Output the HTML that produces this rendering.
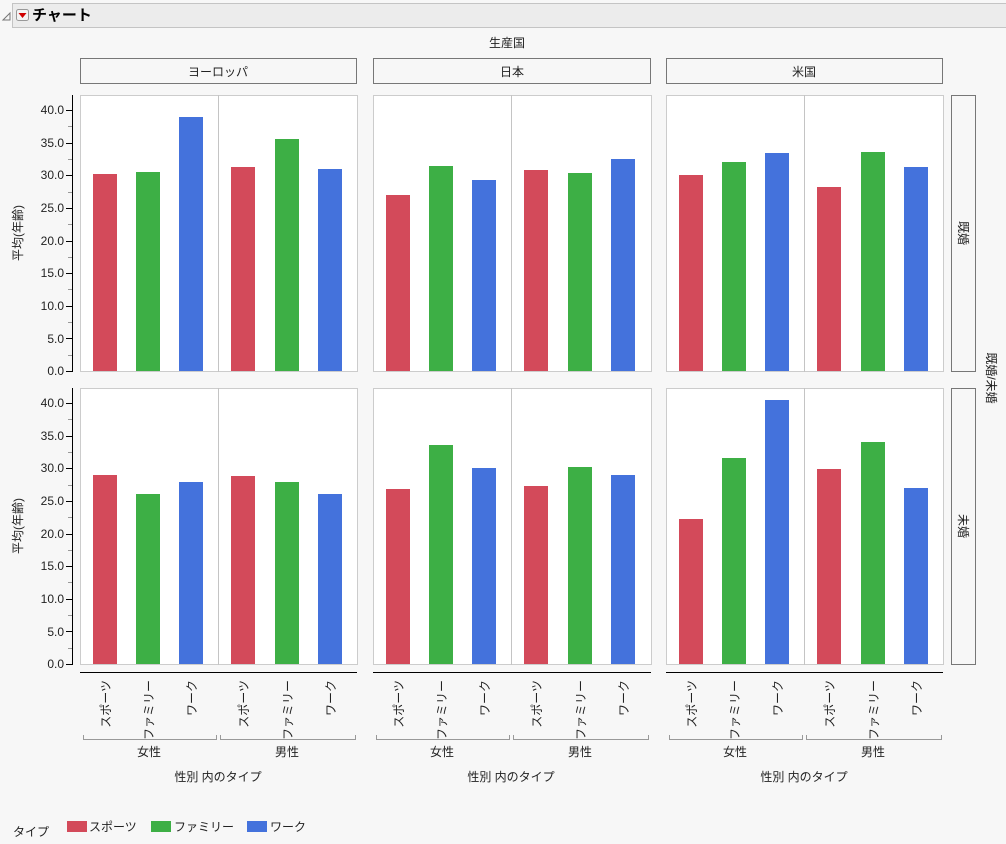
<!DOCTYPE html>
<html><head><meta charset="utf-8">
<style>
html,body{margin:0;padding:0;background:#f7f7f7;}
svg{display:block;font-family:"Liberation Sans","Noto Sans CJK JP",sans-serif;}
text{font-size:12px;fill:#222;}
</style></head>
<body>
<svg id="s" width="1006" height="844" viewBox="0 0 1006 844" xmlns="http://www.w3.org/2000/svg">
<rect x="0" y="0" width="1006" height="844" fill="#f7f7f7"/>
<rect x="12.5" y="3.5" width="995" height="24" fill="#ececec" stroke="#c4c4c4"/>
<path d="M3 20 L10 13 L10 20 Z" fill="none" stroke="#777"/>
<rect x="16.5" y="9.5" width="12" height="11" rx="2" fill="#f4f4f4" stroke="#999"/>
<path d="M18.5 13 L26.5 13 L22.5 18 Z" fill="#d00000"/>
<text x="32" y="20" style="font-size:15px;font-weight:bold;fill:#000">チャート</text>
<text x="507" y="47" text-anchor="middle">生産国</text>
<g fill="#f7f7f7" stroke="#777">
<rect x="80.5" y="58.5" width="276" height="25"/>
<rect x="373.5" y="58.5" width="277" height="25"/>
<rect x="666.5" y="58.5" width="276" height="25"/>
<rect x="951.5" y="95.5" width="24" height="276"/>
<rect x="951.5" y="388.5" width="24" height="276"/>
</g>
<text x="218" y="76" text-anchor="middle">ヨーロッパ</text>
<text x="512" y="76" text-anchor="middle">日本</text>
<text x="804" y="76" text-anchor="middle">米国</text>
<text transform="translate(959,233) rotate(90)" text-anchor="middle">既婚</text>
<text transform="translate(959,526) rotate(90)" text-anchor="middle">未婚</text>
<text transform="translate(987,378) rotate(90)" text-anchor="middle">既婚/未婚</text>
<text transform="translate(22,233) rotate(-90)" text-anchor="middle">平均(年齢)</text>
<text transform="translate(22,526) rotate(-90)" text-anchor="middle">平均(年齢)</text>
<g id="g"></g>
<g text-anchor="end">
<text x="64" y="114">40.0</text><text x="64" y="147">35.0</text><text x="64" y="179">30.0</text><text x="64" y="212">25.0</text><text x="64" y="245">20.0</text><text x="64" y="277">15.0</text><text x="64" y="310">10.0</text><text x="64" y="343">5.0</text><text x="64" y="375">0.0</text>
<text x="64" y="407">40.0</text><text x="64" y="440">35.0</text><text x="64" y="472">30.0</text><text x="64" y="505">25.0</text><text x="64" y="538">20.0</text><text x="64" y="570">15.0</text><text x="64" y="603">10.0</text><text x="64" y="636">5.0</text><text x="64" y="668">0.0</text>
</g>
<g text-anchor="end">
<text transform="translate(110,680) rotate(-90)">スポーツ</text><text transform="translate(153,680) rotate(-90)">ファミリー</text><text transform="translate(196,680) rotate(-90)">ワーク</text>
<text transform="translate(248,680) rotate(-90)">スポーツ</text><text transform="translate(292,680) rotate(-90)">ファミリー</text><text transform="translate(335,680) rotate(-90)">ワーク</text>
<text transform="translate(403,680) rotate(-90)">スポーツ</text><text transform="translate(446,680) rotate(-90)">ファミリー</text><text transform="translate(489,680) rotate(-90)">ワーク</text>
<text transform="translate(541,680) rotate(-90)">スポーツ</text><text transform="translate(585,680) rotate(-90)">ファミリー</text><text transform="translate(628,680) rotate(-90)">ワーク</text>
<text transform="translate(696,680) rotate(-90)">スポーツ</text><text transform="translate(739,680) rotate(-90)">ファミリー</text><text transform="translate(782,680) rotate(-90)">ワーク</text>
<text transform="translate(834,680) rotate(-90)">スポーツ</text><text transform="translate(878,680) rotate(-90)">ファミリー</text><text transform="translate(921,680) rotate(-90)">ワーク</text>
</g>
<g text-anchor="middle">
<text x="149" y="756">女性</text><text x="287" y="756">男性</text>
<text x="442" y="756">女性</text><text x="580" y="756">男性</text>
<text x="735" y="756">女性</text><text x="873" y="756">男性</text>
<text x="218" y="781">性別 内のタイプ</text><text x="511" y="781">性別 内のタイプ</text><text x="804" y="781">性別 内のタイプ</text>
</g>
<text x="13" y="836">タイプ</text>
<rect x="67" y="821" width="20" height="11" fill="#d34a5a"/><text x="89" y="831">スポーツ</text>
<rect x="151" y="821" width="20" height="11" fill="#3daf45"/><text x="174" y="831">ファミリー</text>
<rect x="247" y="821" width="20" height="11" fill="#4472dc"/><text x="270" y="831">ワーク</text>
</svg>
<script>
var g=document.getElementById('g'),h='';
var px=[80,373,666],pw=[277,278,277];
var cols=['#d34a5a','#3daf45','#4472dc'];
var offs=[13,56,99,151,195,238];
var tops=[[[174,172,117,167,139,169],[195,166,180,170,173,159],[175,162,153,187,152,167]],
[[475,494,482,476,482,494],[489,445,468,486,467,475],[519,458,400,469,442,488]]];
for(var r=0;r<2;r++){var y0=r?388:95,base=r?664:371;
 for(var c=0;c<3;c++){var x=px[c];
  h+='<rect x="'+(x+.5)+'" y="'+(y0+.5)+'" width="'+pw[c]+'" height="276" fill="#fff" stroke="#ccc"/>';
  h+='<line x1="'+(x+138.5)+'" y1="'+y0+'" x2="'+(x+138.5)+'" y2="'+(base+1)+'" stroke="#c4c4c4"/>';
  for(var i=0;i<6;i++){var t=tops[r][c][i];h+='<rect x="'+(x+offs[i])+'" y="'+t+'" width="24" height="'+(base-t)+'" fill="'+cols[i%3]+'"/>';}
 }
 h+='<line x1="72.5" y1="'+y0+'" x2="72.5" y2="'+(base+1)+'" stroke="#000"/>';
 for(var k=0;k<=16;k++){var yy=Math.round(base-k*2.5*6.525)+.5;h+='<line x1="'+(k%2?68:66)+'" y1="'+yy+'" x2="72" y2="'+yy+'" stroke="'+(k%2?'#999':'#000')+'"/>';}
}
for(var c=0;c<3;c++){var x=px[c];
 h+='<line x1="'+x+'" y1="672.5" x2="'+(x+pw[c])+'" y2="672.5" stroke="#000"/>';
 h+='<path d="M'+(x+3.5)+' 735 V739.5 H'+(x+136.5)+' V735 M'+(x+140.5)+' 735 V739.5 H'+(x+275.5)+' V735" fill="none" stroke="#999"/>';
}
g.innerHTML=h;
</script>
</body></html>
